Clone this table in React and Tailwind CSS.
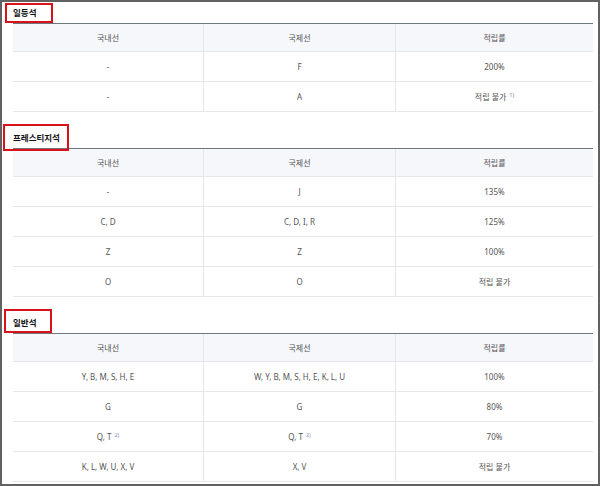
import React from 'react';

const sections = [
  {
    title: '일등석',
    gap: '',
    box: 'left-[-8px] top-[1px] h-[20px] w-[48px]',
    rows: [
      ['-', 'F', '200%'],
      ['-', 'A', ['적립 불가', '1)']],
    ],
  },
  {
    title: '프레스티지석',
    gap: 'mt-[15px]',
    box: 'left-[-10px] top-[-3px] h-[27px] w-[66px]',
    rows: [
      ['-', 'J', '135%'],
      ['C, D', 'C, D, I, R', '125%'],
      ['Z', 'Z', '100%'],
      ['O', 'O', '적립 불가'],
    ],
  },
  {
    title: '일반석',
    gap: 'mt-[15px]',
    box: 'left-[-9px] top-[-3px] h-[24px] w-[48px]',
    rows: [
      ['Y, B, M, S, H, E', 'W, Y, B, M, S, H, E, K, L, U', '100%'],
      ['G', 'G', '80%'],
      [['Q, T', '2)'], ['Q, T', '2)'], '70%'],
      ['K, L, W, U, X, V', 'X, V', '적립 불가'],
    ],
  },
];

function Cell({ value, last }) {
  const content = Array.isArray(value) ? (
    <span>
      {value[0]}
      <sup className={`ml-[3px] text-[5.5px] ${value[1] === '2)' ? 'text-[#7d8fc0]' : 'text-[#777]'}`}>{value[1]}</sup>
    </span>
  ) : value;
  return (
    <div className={`flex items-center justify-center ${last ? '' : 'border-r border-[#e6e7ea]'}`}>
      {content}
    </div>
  );
}

function Row({ cells, header }) {
  return (
    <div
      className={`grid grid-cols-[191px_192px_1fr] border-b border-[#e6e7ea] ${
        header ? 'h-[28px] bg-[#f5f7fb]' : 'h-[30px]'
      }`}
    >
      {cells.map((c, i) => (
        <Cell key={i} value={c} last={i === cells.length - 1} />
      ))}
    </div>
  );
}

export default function App() {
  return (
    <div
      className="h-[486px] w-[600px] overflow-hidden border-2 border-[#626262] bg-white pl-[11px] pr-[5px] text-[8px] text-[#555]"
      style={{ fontFamily: '"Noto Sans", "Noto Sans CJK KR", sans-serif' }}
    >
      {sections.map((s) => (
        <section key={s.title} className={s.gap}>
          <div className="relative flex h-[21px] items-center pt-[1px]">
            <h2 className="text-[8.5px] font-bold text-[#111]">{s.title}</h2>
            <div className={`absolute border-2 border-[#d8121b] ${s.box}`} />
          </div>
          <div className="border-t border-[#6f757c]">
            <Row header cells={['국내선', '국제선', '적립률']} />
            {s.rows.map((r, i) => (
              <Row key={i} cells={r} />
            ))}
          </div>
        </section>
      ))}
    </div>
  );
}
